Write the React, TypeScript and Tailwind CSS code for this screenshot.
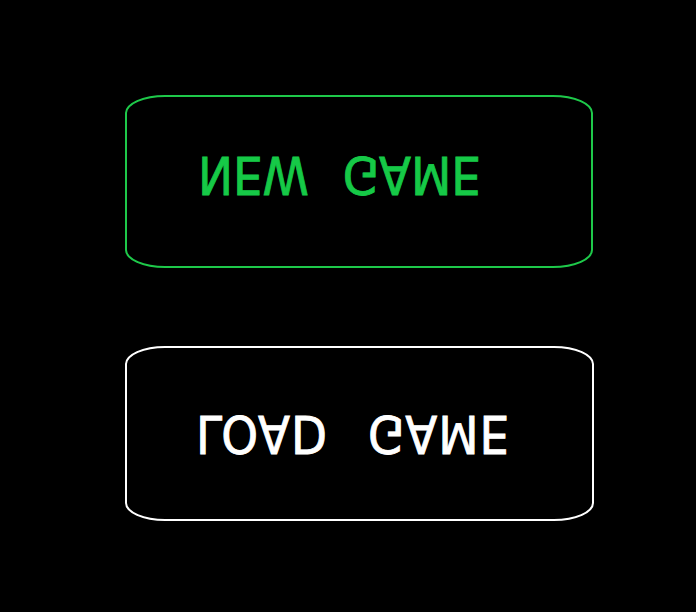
export default function App() {
  return (
    <div className="min-h-screen w-full bg-black pl-[125px] pt-[95px]" style={{ fontFamily: '"DejaVu Sans Condensed", "DejaVu Sans", sans-serif' }}>
      <div className="flex flex-col gap-[78px]">
        {/* New game */}
        <button className="flex h-[173px] w-[468px] items-start rounded-[40px/18px] border-2 border-[#1ec94a] bg-black pl-[71px] pt-[52px]">
          <span className="inline-block -scale-y-100 text-[52px] leading-none text-[#16c947] [-webkit-text-stroke:0.8px_#16c947] [word-spacing:19px]">
            NEW GAME
          </span>
        </button>
        {/* Load game */}
        <button className="flex h-[175px] w-[469px] items-start rounded-[40px/18px] border-2 border-white bg-black pl-[69px] pt-[60px]">
          <span className="inline-block -scale-y-100 text-[52px] leading-none tracking-[1px] text-white [-webkit-text-stroke:0.8px_#fff] [word-spacing:24px]">
            LOAD GAME
          </span>
        </button>
      </div>
    </div>
  );
}
